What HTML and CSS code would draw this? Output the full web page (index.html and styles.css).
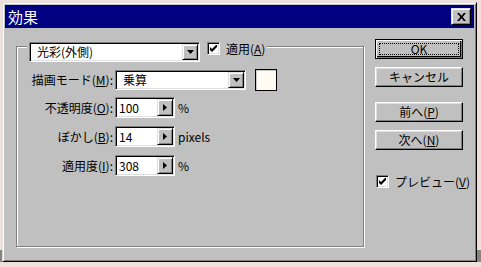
FILE: index.html
```html
<!DOCTYPE html>
<html lang="ja">
<head>
  <meta charset="UTF-8" />
  <title>効果</title>
  <link rel="stylesheet" href="styles.css">
</head>
<body>

  <div class="dialog">
    <!-- タイトルバー -->
    <div class="titlebar">
      <span class="title">効果</span>
      <span class="close-btn">
        <svg width="9" height="8" viewBox="0 0 9 8"><path d="M0 0h2.2l2.3 2.7L6.8 0H9L5.7 4 9 8H6.8L4.5 5.3 2.2 8H0l3.3-4z" fill="#000"/></svg>
      </span>
    </div>

    <div class="content">
      <!-- グループ -->
      <div class="group">
        <div class="group-head">
          <div class="combo combo-effect">
            <span class="combo-text">光彩(外側)</span>
            <span class="drop-btn"><svg width="7" height="4" viewBox="0 0 7 4"><path d="M0 0h7L3.5 4z" fill="#000"/></svg></span>
          </div>
          <span class="check"><svg width="7" height="7" viewBox="0 0 7 7"><path d="M0 2v3l2 2 5-5V-1L2 4z" fill="#000"/></svg></span>
          <span class="check-label">適用(<u>A</u>)</span>
        </div>

        <div class="row row-mode">
          <span class="row-label">描画モード(<u>M</u>):</span>
          <div class="combo combo-mode">
            <span class="combo-text">乗算</span>
            <span class="drop-btn"><svg width="7" height="4" viewBox="0 0 7 4"><path d="M0 0h7L3.5 4z" fill="#000"/></svg></span>
          </div>
          <span class="swatch"></span>
        </div>

        <div class="row row-num row-first">
          <span class="row-label">不透明度(<u>O</u>):</span>
          <div class="field">
            <span class="field-text">100</span>
            <span class="spin-btn"><svg width="4" height="7" viewBox="0 0 4 7"><path d="M0 0l4 3.5L0 7z" fill="#000"/></svg></span>
          </div>
          <span class="unit">%</span>
        </div>

        <div class="row row-num">
          <span class="row-label">ぼかし(<u>B</u>):</span>
          <div class="field">
            <span class="field-text">14</span>
            <span class="spin-btn"><svg width="4" height="7" viewBox="0 0 4 7"><path d="M0 0l4 3.5L0 7z" fill="#000"/></svg></span>
          </div>
          <span class="unit">pixels</span>
        </div>

        <div class="row row-num">
          <span class="row-label">適用度(<u>I</u>):</span>
          <div class="field">
            <span class="field-text">308</span>
            <span class="spin-btn"><svg width="4" height="7" viewBox="0 0 4 7"><path d="M0 0l4 3.5L0 7z" fill="#000"/></svg></span>
          </div>
          <span class="unit">%</span>
        </div>
      </div>

      <!-- ボタン -->
      <div class="side">
        <div class="btn btn-default"><span class="focus">OK</span></div>
        <div class="btn btn-cancel">キャンセル</div>
        <div class="btn btn-prev">前へ(<u>P</u>)</div>
        <div class="btn btn-next">次へ(<u>N</u>)</div>
        <div class="preview">
          <span class="check"><svg width="7" height="7" viewBox="0 0 7 7"><path d="M0 2v3l2 2 5-5V-1L2 4z" fill="#000"/></svg></span>
          <span class="check-label">プレビュー(<u>V</u>)</span>
        </div>
      </div>
    </div>
  </div>

</body>
</html>
```

FILE: styles.css
```css
html {
  background: linear-gradient(#f1dfdc 0, #f1dfdc 250px, #858585 250px);
}

body {
  margin: 0;
  padding: 2px 0 0 2px;
  font-family: "Noto Sans CJK JP", sans-serif;
  font-size: 12px;
  line-height: 16px;
  color: #000;
}

u {
  text-decoration: underline;
  text-underline-offset: 1px;
}

/* ウィンドウ枠 */
.dialog {
  width: 475px;
  height: 260px;
  box-sizing: border-box;
  background: #c0c0c0;
  border: 1px solid;
  border-color: #dfdfdf #000 #000 #dfdfdf;
  box-shadow: inset 1px 1px #fff, inset -1px -1px #808080;
  padding: 2px;
}

.titlebar {
  height: 23px;
  background: #000080;
  display: flex;
  align-items: center;
  padding: 0 3px 0 3px;
}

.title {
  color: #fff;
  font-size: 15px;
  line-height: 18px;
  letter-spacing: 0;
}

.close-btn {
  margin-left: auto;
  width: 20px;
  height: 17px;
  box-sizing: border-box;
  background: #c0c0c0;
  border: 1px solid;
  border-color: #dfdfdf #000 #000 #dfdfdf;
  box-shadow: inset 1px 1px #fff, inset -1px -1px #808080;
  display: flex;
  align-items: center;
  justify-content: center;
}

.content {
  display: flex;
  align-items: flex-start;
  padding: 11px 0 0 11px;
}

/* グループボックス */
.group {
  width: 348px;
  height: 201px;
  box-sizing: border-box;
  margin-top: 7px;
  border: 1px solid #808080;
  box-shadow: 1px 1px 0 #fff, inset 1px 1px 0 #fff;
}

.group-head {
  display: flex;
  align-items: flex-start;
  width: max-content;
  margin: -5px 0 0 10px;
  padding: 0 2px;
  background: #c0c0c0;
}

.combo {
  display: flex;
  align-items: center;
  height: 20px;
  box-sizing: border-box;
  background: #fff;
  border: 1px solid;
  border-color: #808080 #fff #fff #808080;
  box-shadow: inset 1px 1px #000, inset -1px -1px #dfdfdf;
  padding: 1px;
}

.combo-effect {
  width: 171px;
}

.combo-mode {
  width: 131px;
}

.combo-text {
  padding-left: 6px;
}

.drop-btn,
.spin-btn {
  margin-left: auto;
  width: 16px;
  height: 16px;
  box-sizing: border-box;
  background: #c0c0c0;
  border: 1px solid;
  border-color: #dfdfdf #000 #000 #dfdfdf;
  box-shadow: inset 1px 1px #fff, inset -1px -1px #808080;
  display: flex;
  align-items: center;
  justify-content: center;
}

.check {
  width: 13px;
  height: 13px;
  box-sizing: border-box;
  background: #fff;
  border: 1px solid;
  border-color: #808080 #fff #fff #808080;
  box-shadow: inset 1px 1px #000, inset -1px -1px #dfdfdf;
  display: flex;
  align-items: center;
  justify-content: center;
}

.group-head .check {
  margin-left: 7px;
}

.check-label {
  margin-left: 6px;
  line-height: 13px;
}

/* 行 */
.row {
  display: flex;
  align-items: center;
}

.row-mode {
  margin-top: 7px;
}

.row-num {
  margin-top: 8px;
}

.row-first {
  margin-top: 6px;
}

.row-label {
  width: 96px;
  margin-right: 2px;
  text-align: right;
}

.swatch {
  width: 22px;
  height: 22px;
  box-sizing: border-box;
  margin-left: 9px;
  background: #fffaf2;
  border: 1px solid #000;
  box-shadow: inset 1px 1px #c8c8c8;
}

.field {
  display: flex;
  align-items: center;
  width: 60px;
  height: 21px;
  box-sizing: border-box;
  background: #fff;
  border: 1px solid;
  border-color: #808080 #fff #fff #808080;
  box-shadow: inset 1px 1px #000, inset -1px -1px #dfdfdf;
  padding: 1px;
}

.field-text {
  padding-left: 2px;
}

.spin-btn {
  height: 17px;
}

.unit {
  margin-left: 3px;
}

/* 右側のボタン */
.side {
  display: flex;
  flex-direction: column;
  margin-left: 11px;
}

.btn {
  width: 88px;
  height: 20px;
  box-sizing: border-box;
  background: #c0c0c0;
  border: 1px solid;
  border-color: #fff #000 #000 #fff;
  box-shadow: inset -1px -1px #808080, inset 1px 1px #dfdfdf;
  display: flex;
  align-items: center;
  justify-content: center;
}

.btn-default {
  border: 1px solid #000;
  box-shadow: inset 1px 1px #fff, inset -1px -1px #808080, inset -2px -2px #000;
  padding: 3px;
}

.focus {
  flex: 1;
  align-self: stretch;
  display: flex;
  align-items: center;
  justify-content: center;
  outline: 1px dotted #000;
  outline-offset: -1px;
}

.btn-cancel {
  margin-top: 8px;
}

.btn-prev {
  margin-top: 15px;
}

.btn-next {
  margin-top: 8px;
}

.preview {
  display: flex;
  align-items: center;
  margin: 25px 0 0 1px;
}
```
